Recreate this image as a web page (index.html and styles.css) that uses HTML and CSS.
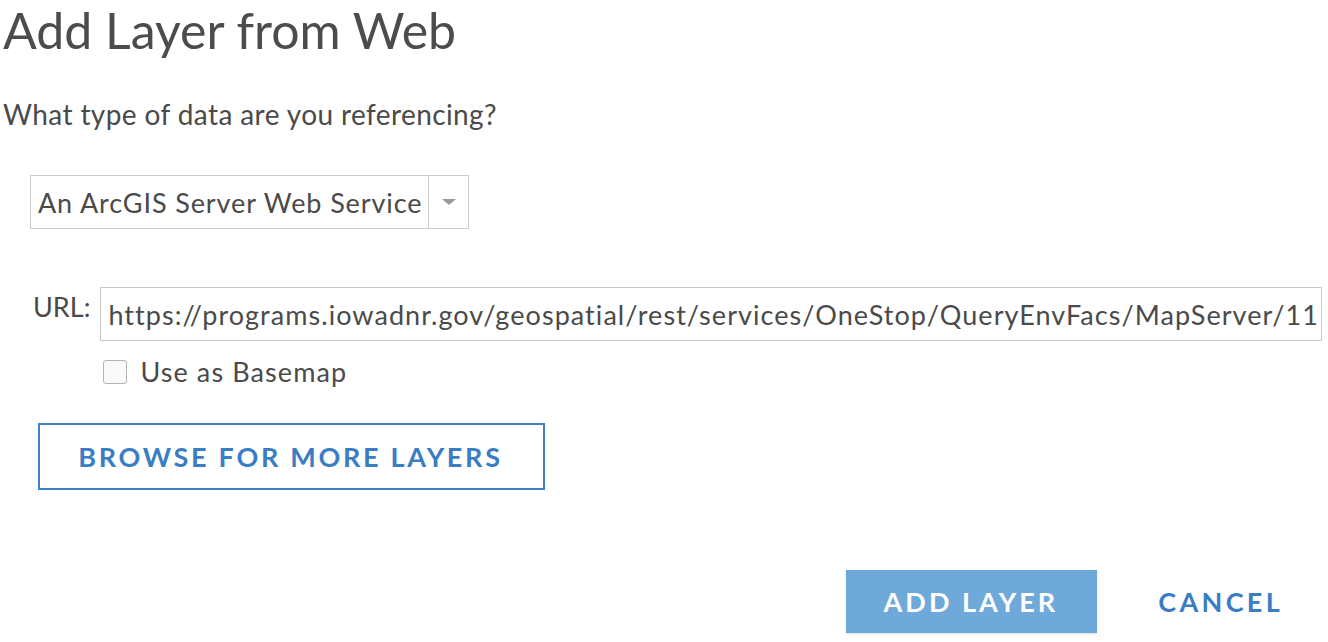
FILE: index.html
```html
<!DOCTYPE html>
<html lang="en">
<head>
<meta charset="utf-8">
<title>Add Layer from Web</title>
<link rel="stylesheet" href="styles.css">
</head>
<body>
<div class="dialog">
  <h1 class="title">Add Layer from Web</h1>
  <p class="question">What type of data are you referencing?</p>
  <div class="select">
    <span class="select-value">An ArcGIS Server Web Service</span>
    <span class="select-arrow"><svg width="16" height="8" viewBox="0 0 16 8"><path d="M1 1 L15 1 L8 7 Z" fill="#9a9a9a"/></svg></span>
  </div>
  <div class="url-row">
    <label class="url-label">URL:</label>
    <div class="url-field">
      <div class="url-input">https://programs.iowadnr.gov/geospatial/rest/services/OneStop/QueryEnvFacs/MapServer/11</div>
      <label class="check-row"><span class="checkbox"></span><span class="check-text">Use as Basemap</span></label>
    </div>
  </div>
  <div class="browse-row">
    <button class="btn-outline">BROWSE FOR MORE LAYERS</button>
  </div>
  <div class="footer">
    <button class="btn-primary">ADD LAYER</button>
    <button class="btn-link">CANCEL</button>
  </div>
</div>
</body>
</html>
```
FILE: styles.css
```css
html, body {
  margin: 0;
  padding: 0;
  background: #ffffff;
}
body {
  font-family: Lato, "Noto Sans", "Liberation Sans", sans-serif;
  color: #4a4a4a;
}
.dialog {
  display: flex;
  flex-direction: column;
  width: 1328px;
  height: 642px;
  box-sizing: border-box;
}
.title {
  margin: 0 0 0 3px;
  font-size: 50px;
  line-height: 60px;
  font-weight: 400;
  color: #4c4c4c;
}
.question {
  margin: 37px 0 0 3px;
  font-size: 28px;
  line-height: 34px;
  letter-spacing: 0.4px;
}
.select {
  margin: 44px 0 0 30px;
  width: 439px;
  height: 54px;
  box-sizing: border-box;
  border: 1px solid #cdcdcd;
  display: flex;
  align-items: stretch;
}
.select-value {
  flex: 1;
  padding-left: 7px;
  font-size: 27px;
  line-height: 54px;
  letter-spacing: 0.9px;
  color: #4a4a4a;
  white-space: nowrap;
}
.select-arrow {
  width: 39px;
  border-left: 1px solid #cdcdcd;
  display: flex;
  align-items: center;
  justify-content: center;
}
.url-row {
  margin: 58px 0 0 33px;
  display: flex;
  gap: 10px;
}
.url-label {
  font-size: 27px;
  line-height: 34px;
  padding-top: 3px;
}
.url-field {
  display: flex;
  flex-direction: column;
}
.url-input {
  width: 1222px;
  height: 54px;
  box-sizing: border-box;
  border: 1px solid #c8c8c8;
  padding-left: 7px;
  font-size: 27px;
  line-height: 54px;
  letter-spacing: 1.05px;
  white-space: nowrap;
  overflow: hidden;
  color: #4a4a4a;
}
.check-row {
  margin: 16px 0 0 3px;
  display: flex;
  align-items: center;
  gap: 13px;
}
.checkbox {
  width: 24px;
  height: 24px;
  box-sizing: border-box;
  border: 1px solid #b5b5b5;
  border-radius: 3px;
  background: #fafafa;
}
.check-text {
  font-size: 27px;
  line-height: 30px;
  letter-spacing: 1.1px;
}
.browse-row {
  margin: 36px 0 0 38px;
  display: flex;
}
.btn-outline {
  width: 507px;
  height: 67px;
  box-sizing: border-box;
  border: 2px solid #3f80c6;
  background: #fff;
  color: #3a7dc4;
  font-family: Lato, "Noto Sans", sans-serif;
  font-size: 27px;
  font-weight: 700;
  letter-spacing: 2.7px;
  padding-left: 4px;
  cursor: pointer;
}
.footer {
  margin-top: auto;
  margin-bottom: 9px;
  display: flex;
  justify-content: flex-end;
  align-items: center;
  padding-right: 45px;
  gap: 61px;
}
.btn-primary {
  width: 251px;
  height: 63px;
  border: none;
  background: #6fa9d9;
  color: #ffffff;
  font-family: Lato, "Noto Sans", sans-serif;
  font-size: 27px;
  font-weight: 700;
  letter-spacing: 3px;
  padding-left: 4px;
  box-shadow: 0 1px 2px rgba(0,0,0,0.15);
}
.btn-link {
  border: none;
  background: none;
  padding: 0;
  color: #3a7dc4;
  font-family: Lato, "Noto Sans", sans-serif;
  font-size: 27px;
  font-weight: 700;
  letter-spacing: 3.3px;
}
```
